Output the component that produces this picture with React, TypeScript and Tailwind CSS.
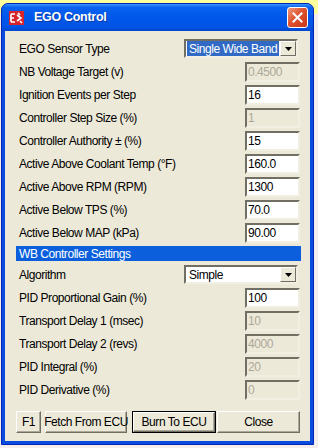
import clsx from "clsx";

const font = "font-['Liberation_Sans',sans-serif]";
const txt = "text-[12px] tracking-[-0.45px] leading-none whitespace-nowrap";

function Row({ label, children }: { label: string; children: React.ReactNode }) {
  return (
    <div className="flex h-[23px] items-center justify-between">
      <span className={clsx("pl-[3px] text-black", txt)}>{label}</span>
      {children}
    </div>
  );
}

function Field({ value, disabled }: { value: string; disabled?: boolean }) {
  return (
    <div
      className={clsx(
        "flex h-[20px] w-[55px] items-center border-2 border-t-[#716f64] border-l-[#716f64] border-b-[#f1efe2] border-r-[#f1efe2] pl-[1px]",
        txt,
        disabled ? "bg-[#ece9d8] text-[#aca899]" : "bg-white text-black"
      )}
    >
      {value}
    </div>
  );
}

function Combo({ value, selected }: { value: string; selected?: boolean }) {
  return (
    <div className="mr-[2px] flex h-[19px] w-[114px] items-center border-2 border-t-[#716f64] border-l-[#716f64] border-b-[#f1efe2] border-r-[#f1efe2] bg-white">
      <div className="flex h-full flex-1 items-center pl-[1px] pr-[1px]">
        <span
          className={clsx(
            "flex h-[15px] items-center px-[2px]",
            txt,
            selected ? "w-full bg-[#316ac5] text-white" : "text-black"
          )}
        >
          {value}
        </span>
      </div>
      <div className="flex h-full w-[16px] items-center justify-center border border-t-white border-l-white border-b-[#716f64] border-r-[#716f64] bg-[#ece9d8]">
        <svg width="7" height="4" viewBox="0 0 7 4">
          <path d="M0 0h7L3.5 4z" fill="#000" />
        </svg>
      </div>
    </div>
  );
}

function Btn({ label, w, def }: { label: string; w: string; def?: boolean }) {
  return (
    <div className={clsx("h-[22px]", w, def ? "border border-black" : "")}>
      <div
        className={clsx(
          "flex h-full w-full items-center justify-center border border-t-white border-l-white border-b-[#716f64] border-r-[#716f64] bg-[#ece9d8] text-black shadow-[inset_-1px_-1px_0_#aca899]",
          txt
        )}
      >
        {label}
      </div>
    </div>
  );
}

export default function App() {
  return (
    <div
      className={clsx(
        "h-[448px] w-[318px] overflow-hidden bg-[linear-gradient(to_bottom,#ffff9c_0px,#ffff9c_14px,#f3eded_14px)]",
        font
      )}
    >
      <div className="ml-[1px] mt-[3px] flex h-[442px] w-[313px] flex-col rounded-t-[7px] border border-[#0026b8] bg-[#0a4ce0]">
        {/* title bar */}
        <div className="flex h-[27px] items-center rounded-t-[6px] bg-[linear-gradient(to_bottom,#3d95ff_0%,#0a62f0_12%,#0057ea_50%,#0054e5_85%,#0046cc_100%)] pl-[7px] pr-[5px]">
          <svg width="15" height="14" viewBox="0 0 15 14" className="mr-[10px]">
            <rect width="15" height="14" fill="#d8232a" />
            <path d="M2 3h4M2 7h3M2 11h4M2 3v8M8 4l4 3-4 3M9 2l2 2M11 10l2 2" stroke="#fff" strokeWidth="1.6" fill="none" />
          </svg>
          <span className="whitespace-nowrap text-[12.5px] font-bold tracking-[-0.3px] text-white [text-shadow:1px_1px_0_#0a3aa0]">
            EGO Control
          </span>
          <div className="ml-auto flex h-[21px] w-[21px] items-center justify-center rounded-[3px] border border-white bg-[linear-gradient(135deg,#f09a7f_0%,#e0532f_45%,#c6391b_100%)]">
            <svg width="11" height="11" viewBox="0 0 11 11">
              <path d="M1.5 1.5l8 8M9.5 1.5l-8 8" stroke="#fff" strokeWidth="2" strokeLinecap="square" />
            </svg>
          </div>
        </div>
        {/* content */}
        <div className="mx-[3px] mb-[3px] flex flex-1 flex-col bg-[#ece9d8] pl-[11px] pr-[10px] pt-[6px]">
          <Row label="EGO Sensor Type">
            <Combo value="Single Wide Band" selected />
          </Row>
          <Row label="NB Voltage Target (v)">
            <Field value="0.4500" disabled />
          </Row>
          <Row label="Ignition Events per Step">
            <Field value="16" />
          </Row>
          <Row label="Controller Step Size (%)">
            <Field value="1" disabled />
          </Row>
          <Row label="Controller Authority ± (%)">
            <Field value="15" />
          </Row>
          <Row label="Active Above Coolant Temp (°F)">
            <Field value="160.0" />
          </Row>
          <Row label="Active Above RPM (RPM)">
            <Field value="1300" />
          </Row>
          <Row label="Active Below TPS (%)">
            <Field value="70.0" />
          </Row>
          <Row label="Active Below MAP (kPa)">
            <Field value="90.00" />
          </Row>
          <div className={clsx("my-[2px] mr-[-1px] flex h-[15px] items-center bg-[#0b5fdc] pl-[3px] text-white", txt)}>
            WB Controller Settings
          </div>
          <Row label="Algorithm">
            <Combo value="Simple" />
          </Row>
          <Row label="PID Proportional Gain (%)">
            <Field value="100" />
          </Row>
          <Row label="Transport Delay 1 (msec)">
            <Field value="10" disabled />
          </Row>
          <Row label="Transport Delay 2 (revs)">
            <Field value="4000" disabled />
          </Row>
          <Row label="PID Integral (%)">
            <Field value="20" disabled />
          </Row>
          <Row label="PID Derivative (%)">
            <Field value="0" disabled />
          </Row>
          <div className="mt-[10px] flex">
            <Btn label="F1" w="w-[26px]" />
            <div className="ml-[4px]">
              <Btn label="Fetch From ECU" w="w-[82px]" />
            </div>
            <div className="ml-[5px]">
              <Btn label="Burn To ECU" w="w-[84px]" def />
            </div>
            <div className="ml-[1px]">
              <Btn label="Close" w="w-[83px]" />
            </div>
          </div>
        </div>
      </div>
    </div>
  );
}
